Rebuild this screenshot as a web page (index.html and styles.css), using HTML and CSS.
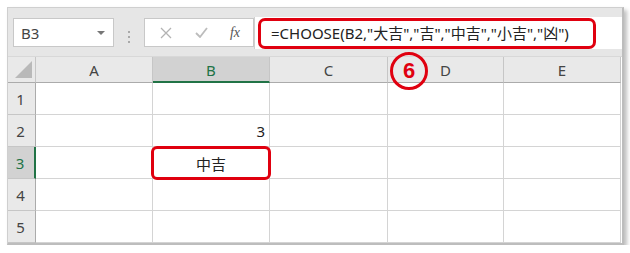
FILE: index.html
```html
<!DOCTYPE html>
<html lang="ja">
<head>
<meta charset="utf-8">
<title>CHOOSE</title>
<link rel="stylesheet" href="styles.css">
</head>
<body>
<div class="sheet">
  <div class="toolbar">
    <div class="namebox"><span>B3</span><span class="drop"></span></div>
    <div class="grip"><i></i><i></i><i></i></div>
    <div class="btns">
      <span class="btn x"><svg width="12" height="12" viewBox="0 0 12 12"><path d="M1 1L11 11M11 1L1 11" stroke="#b3b3b3" stroke-width="1.3" fill="none"/></svg></span>
      <span class="btn ok"><svg width="13" height="11" viewBox="0 0 13 11"><path d="M1 6L5 10L12 1" stroke="#bcbcbc" stroke-width="1.8" fill="none"/></svg></span>
      <span class="btn fx">fx</span>
    </div>
    <div class="formula"><span class="mark">=CHOOSE(B2,"大吉","吉","中吉","小吉","凶")</span></div>
  </div>
  <div class="grid">
    <div class="hd corner"><span class="tri"></span></div>
    <div class="hd">A</div>
    <div class="hd sel">B</div>
    <div class="hd">C</div>
    <div class="hd">D</div>
    <div class="hd">E</div>

    <div class="rh">1</div><div class="c"></div><div class="c"></div><div class="c"></div><div class="c"></div><div class="c"></div>
    <div class="rh">2</div><div class="c"></div><div class="c num">3</div><div class="c"></div><div class="c"></div><div class="c"></div>
    <div class="rh rsel">3</div><div class="c"></div><div class="c act"><span class="box">中吉</span></div><div class="c"></div><div class="c"></div><div class="c"></div>
    <div class="rh">4</div><div class="c"></div><div class="c"></div><div class="c"></div><div class="c"></div><div class="c"></div>
    <div class="rh">5</div><div class="c"></div><div class="c"></div><div class="c"></div><div class="c"></div><div class="c"></div>

    <div class="step">6</div>
  </div>
</div>
</body>
</html>
```

FILE: styles.css
```css
body { margin: 0; background: #fff; font-family: "Noto Sans", "Noto Sans CJK JP", sans-serif; color: #333; }

.sheet { margin: 7px 0 0 7px; width: 614px; border: 1px solid #cfcfcf; border-right: 2px solid #bdbdbd; border-bottom: 2px solid #bdbdbd;
         box-shadow: 3px 3px 4px rgba(0,0,0,0.25); background: #fff; }

.toolbar { display: flex; height: 49px; padding: 10px 0 0 5px; box-sizing: border-box; background: #e6e6e6; border-bottom: 1px solid #d8d8d8; }

.namebox { width: 101px; height: 29px; background: #fff; border: 1px solid #c8c8c8; display: flex; align-items: center; padding-left: 7px; box-sizing: border-box;
           font-size: 15px; color: #444; justify-content: space-between; padding-right: 8px; }
.drop { width: 0; height: 0; border-left: 4px solid transparent; border-right: 4px solid transparent; border-top: 4px solid #777; }

.grip { width: 30px; display: flex; flex-direction: column; align-items: center; justify-content: center; gap: 3px; }
.grip i { width: 2px; height: 2px; background: #a9a9a9; }

.btns { width: 110px; height: 29px; background: #fff; border: 1px solid #c8c8c8; box-sizing: border-box; display: flex; align-items: center; }
.btn { display: flex; justify-content: center; align-items: center; }
.btn.x { width: 38px; padding-left: 2px; }
.btn.ok { width: 32px; }
.btn.fx { width: 36px; font-family: "Liberation Serif", serif; font-style: italic; font-size: 14px; color: #555; }

.formula { flex: 1; height: 32px; margin-top: -1px; background: #fff; border-left: 1px solid #d0d0d0; padding-left: 3px; display: flex; align-items: center; }
.mark { width: 338px; height: 31px; box-sizing: border-box; border: 3px solid #e0000f; border-radius: 7px; padding-left: 10px;
        font-size: 15px; color: #222; line-height: 25px; white-space: nowrap; }

.grid { position: relative; display: grid; grid-template-columns: 28px 117px 117px 118px 116px 117px; grid-template-rows: 26px repeat(5, 32px); }

.hd { background: #e9e9e9; border-right: 1px solid #c6c6c6; border-bottom: 1px solid #ababab; display: flex; align-items: center; justify-content: center;
      font-size: 15px; color: #444; padding-top: 1px; box-sizing: border-box; }
.hd.sel { background: #d2d2d2; color: #217346; border-bottom: 2px solid #217346; }
.corner { justify-content: flex-end; align-items: flex-end; padding: 0 3px 4px 0; }
.tri { width: 0; height: 0; border-left: 17px solid transparent; border-bottom: 17px solid #b9b9b9; }

.rh { background: #e9e9e9; border-right: 1px solid #ababab; border-bottom: 1px solid #c6c6c6; display: flex; align-items: center; justify-content: center;
      font-size: 15px; color: #444; box-sizing: border-box; padding-right: 2px; }
.rh.rsel { background: #d2d2d2; color: #217346; border-right: 2px solid #217346; }

.c { border-right: 1px solid #d4d4d4; border-bottom: 1px solid #d4d4d4; box-sizing: border-box; font-size: 15px; color: #222;
     display: flex; align-items: center; }
.c.num { justify-content: flex-end; padding-right: 4px; }
.c.act { position: relative; }
.box { position: absolute; left: -2px; top: -1px; width: 120px; height: 34px; box-sizing: border-box; border: 3px solid #e0000f; border-radius: 6px;
       display: flex; align-items: center; justify-content: center; font-family: "Noto Sans CJK JP", sans-serif; font-size: 15px; color: #222; }

.step { position: absolute; left: 382px; top: -5px; width: 38px; height: 38px; box-sizing: border-box; border: 3px solid #e0000f; border-radius: 50%;
        display: flex; align-items: center; justify-content: center; color: #e0000f; font-weight: bold; font-size: 22px; font-family: "Liberation Sans", sans-serif; }
```
